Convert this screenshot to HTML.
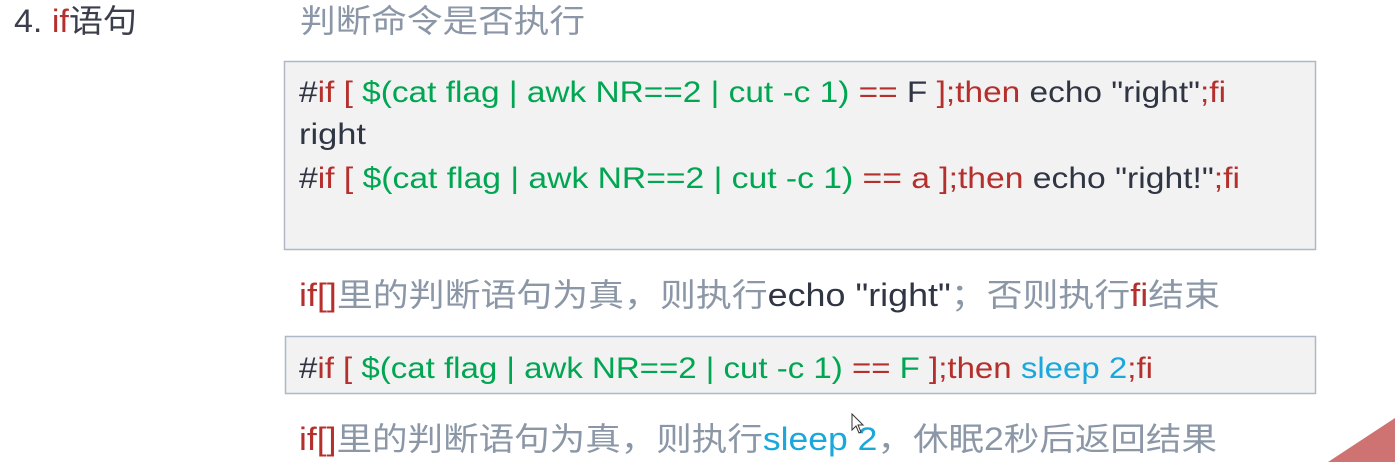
<!DOCTYPE html>
<html><head><meta charset="utf-8"><style>
html,body{margin:0;padding:0;background:#fff;width:1395px;height:462px;overflow:hidden}
svg{display:block}
text{font-family:"Liberation Sans","Noto Sans CJK SC",sans-serif}
</style></head><body>
<svg width="1395" height="462" xmlns="http://www.w3.org/2000/svg">
<rect x="284.5" y="61.5" width="1031" height="188" fill="#f2f2f2" stroke="#aeb8c6" stroke-width="1.5"/>
<rect x="285.5" y="336.5" width="1030" height="57" fill="#f2f2f2" stroke="#aeb8c6" stroke-width="1.5"/>
<polygon points="1328,462 1395,418 1395,462" fill="#cf7372"/>
<text x="14" y="32" font-size="32" textLength="123" lengthAdjust="spacingAndGlyphs" fill="#3a3f4b">4. <tspan fill="#b5302c">if</tspan>语句</text>
<text x="300" y="32" font-size="32" textLength="285" lengthAdjust="spacingAndGlyphs" fill="#8b97a7">判断命令是否执行</text>
<g font-size="30">
<text x="299" y="102" textLength="927" lengthAdjust="spacingAndGlyphs" fill="#2f3543">#<tspan fill="#b5302c">if [ </tspan><tspan fill="#00a651">$(cat flag | awk NR==2 | cut -c 1) </tspan><tspan fill="#b5302c">== </tspan><tspan fill="#2f3543">F </tspan><tspan fill="#b5302c">];then </tspan>echo "right"<tspan fill="#b5302c">;fi</tspan></text>
<text x="299" y="144" textLength="67" lengthAdjust="spacingAndGlyphs" fill="#2f3543">right</text>
<text x="299" y="188" textLength="941" lengthAdjust="spacingAndGlyphs" fill="#2f3543">#<tspan fill="#b5302c">if [ </tspan><tspan fill="#00a651">$(cat flag | awk NR==2 | cut -c 1) </tspan><tspan fill="#b5302c">== a ];then </tspan>echo "right!"<tspan fill="#b5302c">;fi</tspan></text>
<text x="299" y="378" textLength="854" lengthAdjust="spacingAndGlyphs" fill="#2f3543">#<tspan fill="#b5302c">if [ </tspan><tspan fill="#00a651">$(cat flag | awk NR==2 | cut -c 1) </tspan><tspan fill="#b5302c">== </tspan><tspan fill="#00a651">F </tspan><tspan fill="#b5302c">];then </tspan><tspan fill="#1aa8dc">sleep 2</tspan><tspan fill="#b5302c">;fi</tspan></text>
</g>
<g font-size="32">
<text x="299" y="306" textLength="921" lengthAdjust="spacingAndGlyphs" fill="#8b97a7"><tspan fill="#b5302c">if[]</tspan>里的判断语句为真，则执行<tspan fill="#2f3543">echo "right"</tspan>；否则执行<tspan fill="#b5302c">fi</tspan>结束</text>
<text x="299" y="450" textLength="918" lengthAdjust="spacingAndGlyphs" fill="#8b97a7"><tspan fill="#b5302c">if[]</tspan>里的判断语句为真，则执行<tspan fill="#1aa8dc">sleep 2</tspan>，休眠2秒后返回结果</text>
</g>
<path d="M852,414 L852,430 L856,426 L859,433 L861,432 L858,425 L863,425 Z" fill="#fff" stroke="#333" stroke-width="1"/>
</svg>
</body></html>
